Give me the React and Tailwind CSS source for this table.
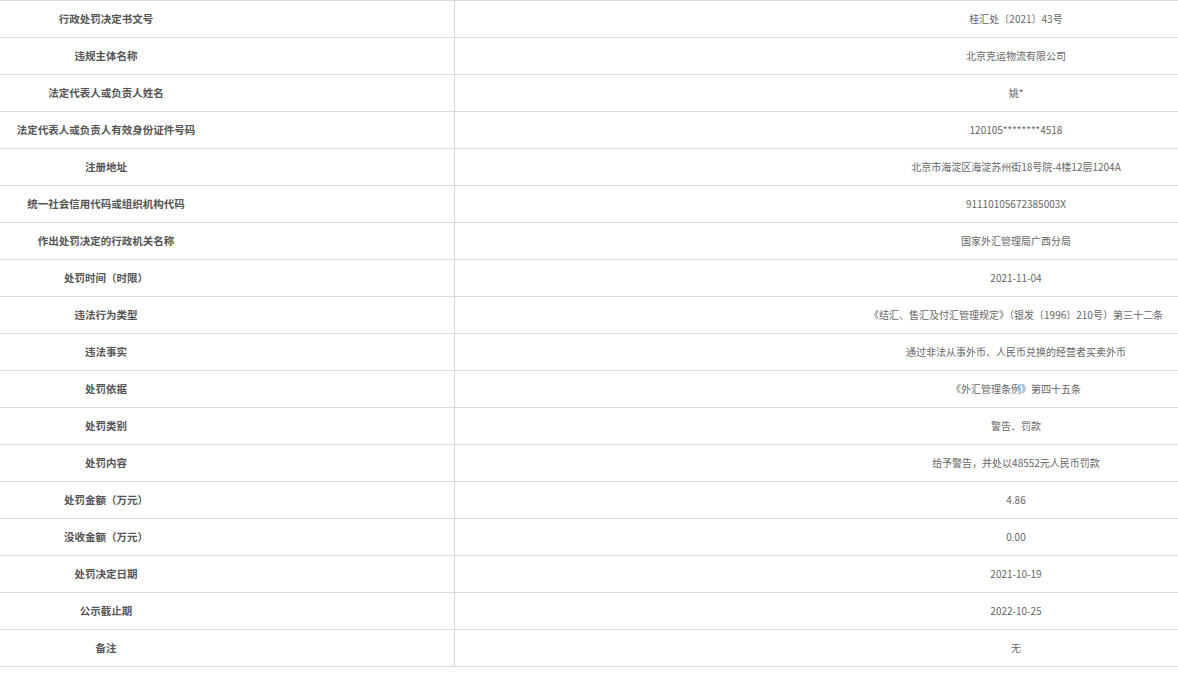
import React from 'react';

const rows = [
  ['行政处罚决定书文号', '桂汇处〔2021〕43号'],
  ['违规主体名称', '北京克运物流有限公司'],
  ['法定代表人或负责人姓名', '姚*'],
  ['法定代表人或负责人有效身份证件号码', '120105********4518'],
  ['注册地址', '北京市海淀区海淀苏州街18号院-4楼12层1204A'],
  ['统一社会信用代码或组织机构代码', '91110105672385003X'],
  ['作出处罚决定的行政机关名称', '国家外汇管理局广西分局'],
  ['处罚时间（时限）', '2021-11-04'],
  ['违法行为类型', '《结汇、售汇及付汇管理规定》（银发〔1996〕210号）第三十二条'],
  ['违法事实', '通过非法从事外币、人民币兑换的经营者买卖外币'],
  ['处罚依据', '《外汇管理条例》第四十五条'],
  ['处罚类别', '警告、罚款'],
  ['处罚内容', '给予警告，并处以48552元人民币罚款'],
  ['处罚金额（万元）', '4.86'],
  ['没收金额（万元）', '0.00'],
  ['处罚决定日期', '2021-10-19'],
  ['公示截止期', '2022-10-25'],
  ['备注', '无'],
];

const App = () => {
  return (
    <div
      className="w-[1178px] bg-white border-t border-[#dcdcdc]"
      style={{ fontFamily: '"Noto Sans CJK SC", "Noto Sans", sans-serif' }}
    >
      {rows.map(([label, value]) => (
        <div key={label} className="flex h-[37px] border-b border-[#dcdcdc]">
          <div className="w-[455px] shrink-0 border-r border-[#d4d4d4] flex items-center">
            <div className="w-[212px] text-center text-[10.5px] font-semibold text-[#555] leading-none whitespace-nowrap">
              {label}
            </div>
          </div>
          <div className="flex-1 flex items-center justify-end">
            <div className="w-[324px] text-center text-[10px] text-[#666] leading-none whitespace-nowrap">
              {value}
            </div>
          </div>
        </div>
      ))}
    </div>
  );
};

export default App;
